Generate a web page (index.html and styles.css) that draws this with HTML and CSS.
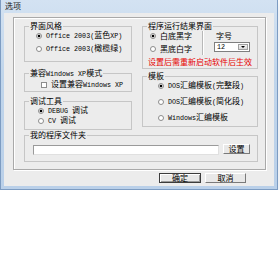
FILE: index.html
```html
<!DOCTYPE html>
<html lang="zh-CN">
<head>
    <meta charset="UTF-8">
    <title>选项</title>
    <link rel="stylesheet" href="styles.css">
</head>
<body>
    <div class="window">
        <div class="titlebar">选项</div>
        <div class="client">
            <div class="panel">
                <div class="columns">
                    <div class="col">
                        <div class="group g-style">
                            <div class="group-title">界面风格</div>
                            <div class="opt"><span class="radio on"></span><span><span class="en">Office 2003(</span>蓝色<span class="en">XP)</span></span></div>
                            <div class="opt"><span class="radio"></span><span><span class="en">Office 2003(</span>橄榄绿<span class="en">)</span></span></div>
                        </div>
                        <div class="group g-compat">
                            <div class="group-title">兼容<span class="en">Windows XP</span>模式</div>
                            <div class="opt"><span class="check"></span><span>设置兼容<span class="en">Windows XP</span></span></div>
                        </div>
                        <div class="group g-debug">
                            <div class="group-title">调试工具</div>
                            <div class="opt"><span class="radio on"></span><span><span class="en">DEBUG </span>调试</span></div>
                            <div class="opt"><span class="radio"></span><span><span class="en">CV </span>调试</span></div>
                        </div>
                    </div>
                    <div class="col">
                        <div class="group g-result">
                            <div class="group-title">程序运行结果界面</div>
                            <div class="result-top">
                                <div class="result-opts">
                                    <div class="opt"><span class="radio on"></span><span>白底黑字</span></div>
                                    <div class="opt"><span class="radio"></span><span>黑底白字</span></div>
                                </div>
                                <div class="divider"></div>
                                <div class="font-size">
                                    <div class="font-label">字号</div>
                                    <div class="select"><span class="en">12</span><span class="drop"></span></div>
                                </div>
                            </div>
                            <div class="hint">设置后需重新启动软件后生效</div>
                        </div>
                        <div class="group g-tpl">
                            <div class="group-title">模板</div>
                            <div class="opt"><span class="radio on"></span><span><span class="en">DOS</span>汇编模板<span class="en">(</span>完整段<span class="en">)</span></span></div>
                            <div class="opt"><span class="radio"></span><span><span class="en">DOS</span>汇编模板<span class="en">(</span>简化段<span class="en">)</span></span></div>
                            <div class="opt"><span class="radio"></span><span><span class="en">Windows</span>汇编模板</span></div>
                        </div>
                    </div>
                    <div class="group g-folder">
                        <div class="group-title">我的程序文件夹</div>
                        <div class="folder-row">
                            <div class="path"></div>
                            <div class="btn small">设置</div>
                        </div>
                    </div>
                </div>
            </div>
            <div class="actions">
                <div class="btn default">确定</div>
                <div class="btn">取消</div>
            </div>
        </div>
    </div>
</body>
</html>
```

FILE: styles.css
```css
* {
    box-sizing: border-box;
}
body {
    margin: 0;
    background: #fff;
    font-family: "Noto Sans CJK SC", "Liberation Sans", sans-serif;
    font-size: 8px;
    color: #000;
}
.en {
    font-family: "Liberation Mono", monospace;
    font-size: 6.7px;
}
.window {
    width: 278px;
    height: 190px;
    padding: 0 3px 3px 3px;
    background: linear-gradient(180deg, #d3e2f2 0%, #c0d5eb 40%, #bad0e9 100%);
    border: 1px solid #7d9cc2;
    border-top: none;
    box-shadow: 0 3px 10px rgba(110, 135, 170, 0.25);
}
.titlebar {
    height: 13px;
    line-height: 12px;
    padding-left: 1px;
    color: #1a1a1a;
}
.client {
    width: 270px;
    height: 173px;
    padding: 4px 0 0 9px;
    background: #ececec;
}
.panel {
    width: 253px;
    height: 153px;
    padding: 4px 0 0 10px;
    border: 1px solid #a9a9a9;
    box-shadow: inset 1px 1px 0 #fff, 1px 1px 0 #fff;
}
.columns {
    display: grid;
    grid-template-columns: 108px 116px;
    column-gap: 10px;
    align-items: start;
}
.col {
    display: flex;
    flex-direction: column;
}
.group {
    border: 1px solid #c6c6c6;
}
/* caption sits on the top border line */
.group-title {
    width: max-content;
    height: 8px;
    line-height: 8px;
    margin: -5px 0 1px 4px;
    padding: 0 1px;
    background: #ececec;
    white-space: nowrap;
}
.opt {
    display: flex;
    align-items: center;
    gap: 4px;
    height: 9px;
    line-height: 9px;
    white-space: nowrap;
}
.radio {
    width: 6px;
    height: 6px;
    flex: none;
    border-radius: 50%;
    border: 1px solid #8c8c8c;
    background: #fff;
}
.radio.on {
    background: radial-gradient(circle, #000 1.1px, #fff 1.7px);
}
.check {
    width: 6px;
    height: 6px;
    flex: none;
    border: 1px solid #8c8c8c;
    background: #fff;
}
.g-style {
    margin-top: 4px;
    padding: 0 0 8px 11px;
}
.g-style .group-title {
    margin-left: -7px;
}
.g-style .opt + .opt {
    margin-top: 4px;
}
.g-compat {
    margin-top: 11px;
    padding: 0 0 2px 16px;
}
.g-compat .group-title {
    margin-left: -12px;
}
.g-compat .opt {
    margin-top: 3px;
}
.g-debug {
    margin-top: 9px;
    padding: 0 0 4px 13px;
}
.g-debug .group-title {
    margin-left: -9px;
}
.g-debug .opt {
    margin-top: 1px;
}
.g-result {
    margin-top: 4px;
    padding: 0 0 2px 6px;
}
.g-result .group-title {
    margin-left: -2px;
}
.result-top {
    display: flex;
}
.result-opts {
    width: 53px;
    padding-left: 1px;
}
.result-opts .opt + .opt {
    margin-top: 4px;
}
.divider {
    width: 2px;
    height: 24px;
    border-left: 1px solid #b8b8b8;
    border-right: 1px solid #fff;
}
.font-size {
    padding-left: 10px;
}
.font-label {
    height: 9px;
    line-height: 9px;
    padding-left: 2px;
}
.select {
    display: flex;
    align-items: center;
    justify-content: space-between;
    width: 36px;
    height: 10px;
    margin-top: 2px;
    padding: 0 1px 0 2px;
    background: #fff;
    border: 1px solid #7f7f7f;
    line-height: 8px;
}
.drop {
    width: 10px;
    height: 6px;
    background: linear-gradient(#f2f2f2, #dcdcdc);
    border: 1px solid #a0a0a0;
    display: flex;
    align-items: center;
    justify-content: center;
}
.drop::after {
    content: "";
    border-left: 2px solid transparent;
    border-right: 2px solid transparent;
    border-top: 2px solid #000;
}
.hint {
    margin-top: 2px;
    margin-left: -1px;
    height: 9px;
    line-height: 9px;
    color: #e60000;
    white-space: nowrap;
}
.g-tpl {
    margin-top: 7px;
    padding: 0 0 4px 15px;
}
.g-tpl .group-title {
    margin-left: -11px;
}
.g-tpl .opt + .opt {
    margin-top: 7px;
}
.g-folder {
    grid-column: 1 / -1;
    margin-top: 5px;
    padding: 0 7px 6px 8px;
}
.g-folder .group-title {
    margin-left: -4px;
}
.folder-row {
    display: flex;
    align-items: flex-start;
    gap: 4px;
    margin-top: 5px;
}
.path {
    width: 186px;
    height: 10px;
    margin-top: 1px;
    background: #fff;
    border: 1px solid #9a9a9a;
    border-bottom-color: #e0e0e0;
    border-right-color: #e0e0e0;
}
.btn {
    display: flex;
    align-items: center;
    justify-content: center;
    width: 41px;
    height: 10px;
    line-height: 8px;
    background: #e8e8e8;
    border: 1px solid;
    border-color: #fff #7a7a7a #7a7a7a #fff;
}
.btn.small {
    width: 27px;
}
.btn.default {
    width: 42px;
    border: 1px solid #3c3c3c;
    box-shadow: inset 1px 1px 0 #fff, inset -1px -1px 0 #9a9a9a;
}
.actions {
    display: flex;
    justify-content: flex-end;
    gap: 4px;
    margin-top: 3px;
    padding-right: 28px;
}
```
